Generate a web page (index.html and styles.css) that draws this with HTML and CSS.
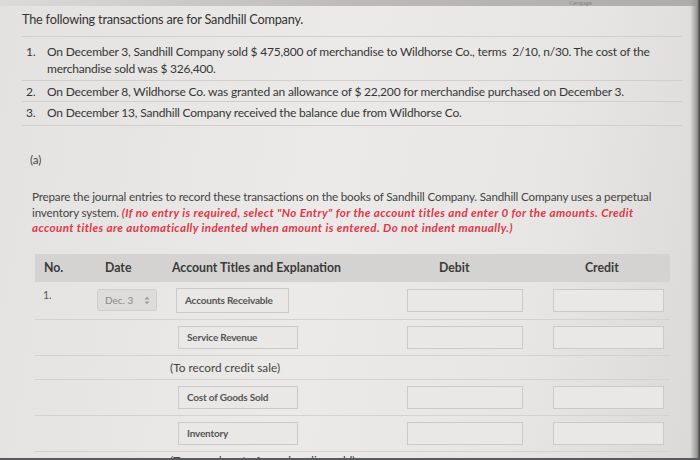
FILE: index.html
```html
<!DOCTYPE html>
<html>
<head>
<meta charset="utf-8">
<link rel="stylesheet" href="styles.css">
</head>
<body>
<div class="screen">
  <div class="topbar"><span class="brand">Cengage</span></div>
  <div class="content">
    <h1 class="title">The following transactions are for Sandhill Company.</h1>
    <ol class="tx">
      <li><span class="num">1.</span><span class="txt">On December 3, Sandhill Company sold $ 475,800 of merchandise to Wildhorse Co., terms &nbsp;2/10, n/30. The cost of the merchandise sold was $ 326,400.</span></li>
      <li><span class="num">2.</span><span class="txt">On December 8, Wildhorse Co. was granted an allowance of $ 22,200 for merchandise purchased on December 3.</span></li>
      <li><span class="num">3.</span><span class="txt">On December 13, Sandhill Company received the balance due from Wildhorse Co.</span></li>
    </ol>
    <div class="part">(a)</div>
    <p class="instr">Prepare the journal entries to record these transactions on the books of Sandhill Company. Sandhill Company uses a perpetual inventory system. <em class="red">(If no entry is required, select "No Entry" for the account titles and enter 0 for the amounts. Credit account titles are automatically indented when amount is entered. Do not indent manually.)</em></p>

    <div class="journal">
      <div class="row head">
        <div class="c-no">No.</div>
        <div class="c-date">Date</div>
        <div class="c-acct">Account Titles and Explanation</div>
        <div class="c-dr">Debit</div>
        <div class="c-cr">Credit</div>
      </div>
      <div class="row entry">
        <div class="c-no num1">1.</div>
        <div class="c-date"><div class="sel">Dec. 3<span class="arrows"><svg width="6" height="9" viewBox="0 0 6 9"><path d="M0.5 3.5 L3 0.8 L5.5 3.5 Z M0.5 5.5 L3 8.2 L5.5 5.5 Z" fill="#9a9a9a"/></svg></span></div></div>
        <div class="c-acct"><div class="box acct first">Accounts Receivable</div></div>
        <div class="c-dr"><div class="box amt"></div></div>
        <div class="c-cr"><div class="box amt"></div></div>
      </div>
      <div class="row entry">
        <div class="c-no"></div>
        <div class="c-date"></div>
        <div class="c-acct"><div class="box acct">Service Revenue</div></div>
        <div class="c-dr"><div class="box amt"></div></div>
        <div class="c-cr"><div class="box amt"></div></div>
      </div>
      <div class="row note"><div class="c-acct-note">(To record credit sale)</div></div>
      <div class="row entry">
        <div class="c-no"></div>
        <div class="c-date"></div>
        <div class="c-acct"><div class="box acct">Cost of Goods Sold</div></div>
        <div class="c-dr"><div class="box amt"></div></div>
        <div class="c-cr"><div class="box amt"></div></div>
      </div>
      <div class="row entry">
        <div class="c-no"></div>
        <div class="c-date"></div>
        <div class="c-acct"><div class="box acct">Inventory</div></div>
        <div class="c-dr"><div class="box amt"></div></div>
        <div class="c-cr"><div class="box amt"></div></div>
      </div>
      <div class="row note last"><div class="c-acct-note">(To record cost of merchandise sold)</div></div>
    </div>
  </div>
  <div class="edge"></div>
  <div class="bottom"></div>
</div>
</body>
</html>
```

FILE: styles.css
```css
* { box-sizing: border-box; }
html, body { margin: 0; padding: 0; }
body {
  width: 700px;
  height: 460px;
  overflow: hidden;
  font-family: Lato, "Open Sans", "Liberation Sans", sans-serif;
  color: #3b3b3b;
  background: #e2e1df;
}
.screen {
  position: relative;
  width: 700px;
  height: 460px;
  overflow: hidden;
  background: linear-gradient(100deg, #e3e2e0 0%, #ebeae8 45%, #e7e6e4 75%, #dad9d7 100%);
}
.topbar {
  height: 6px;
  background: linear-gradient(90deg, #dcdbd9 0%, #bdbab9 50%, #aeabab 100%);
  display: flex;
  justify-content: flex-end;
}
.brand {
  font-size: 6px;
  color: #8a8786;
  line-height: 6px;
  margin-right: 108px;
}
.content {
  padding: 4px 0 0 22px;
}
.title {
  margin: 0;
  font-size: 12.7px;
  font-weight: 400;
  color: #333;
  line-height: 18px;
  letter-spacing: -0.2px;
}
.tx {
  list-style: none;
  margin: 8px 0 0 0;
  padding: 0;
  width: 660px;
}
.tx li {
  display: flex;
  border-top: 1px solid #d0cfcd;
  padding: 2px 0 1px 4px;
  font-size: 12px;
  line-height: 17px;
  letter-spacing: -0.2px;
  color: #363636;
}
.tx li:first-child { padding-top: 6px; padding-bottom: 3px; }
.tx li:last-child { border-bottom: 1px solid #d0cfcd; padding-bottom: 4px; }
.tx .num { width: 21px; flex: none; }
.tx .txt { width: 612px; }
.part {
  margin: 27px 0 0 8px;
  font-size: 11.5px;
  line-height: 14px;
  color: #444;
}
.instr {
  margin: 22px 0 0 10px;
  width: 622px;
  font-size: 11.6px;
  line-height: 15.5px;
  letter-spacing: -0.15px;
  color: #444;
}
.red {
  color: #e0364a;
  font-weight: 700;
  font-style: italic;
  letter-spacing: 0.4px;
}
.journal {
  margin: 18px 0 0 13px;
  width: 635px;
}
.row {
  display: grid;
  grid-template-columns: 60px 75px 235px 148px 117px;
  align-items: center;
}
.head {
  height: 28px;
  background: #d4d3d1;
  font-size: 12.3px;
  font-weight: 700;
  color: #3a3a3a;
}
.head .c-no { padding-left: 9px; }
.head .c-date { padding-left: 10px; }
.head .c-acct { padding-left: 2px; }
.head .c-dr { padding-left: 34px; }
.head .c-cr { padding-left: 32px; }
.entry {
  border-bottom: 1px solid #d3d2d0;
  padding: 6px 0 6px;
}
.num1 { align-self: start; padding: 1px 0 0 8px; font-size: 10.5px; color: #555; }
.sel {
  margin-left: 2px;
  width: 60px;
  height: 22px;
  background: #dddcda;
  border: 1px solid #cfcecc;
  border-radius: 3px;
  font-size: 10px;
  color: #8a8a8a;
  display: flex;
  align-items: center;
  justify-content: space-between;
  padding: 0 6px 0 7px;
}
.arrows { display: flex; }
.box {
  height: 23px;
  border: 1px solid #cbcac8;
  background: #e9e8e6;
}
.acct {
  margin-left: 8px;
  width: 120px;
  font-size: 10px;
  font-weight: 700;
  color: #555;
  display: flex;
  align-items: center;
  padding-left: 8px;
  letter-spacing: -0.2px;
}
.acct.first { margin-left: 6px; width: 113px; height: 25px; }
.c-dr .amt { margin-left: 2px; width: 116px; }
.c-cr .amt { margin-left: 0; width: 111px; }
.note {
  display: block;
  border-bottom: 1px solid #d3d2d0;
  height: 24px;
  padding: 4px 0 0 135px;
  font-size: 11.8px;
  line-height: 15px;
  color: #444;
}
.note.last { padding-top: 1px; border-bottom: none; }
.edge {
  position: absolute;
  top: 0;
  right: 0;
  width: 10px;
  height: 460px;
  background: linear-gradient(90deg, rgba(150,150,150,0) 0%, #9a9897 70%, #3a3a3c 100%);
}
.bottom {
  position: absolute;
  left: 0;
  bottom: 0;
  width: 700px;
  height: 2px;
  background: #5a5a5c;
}
```
